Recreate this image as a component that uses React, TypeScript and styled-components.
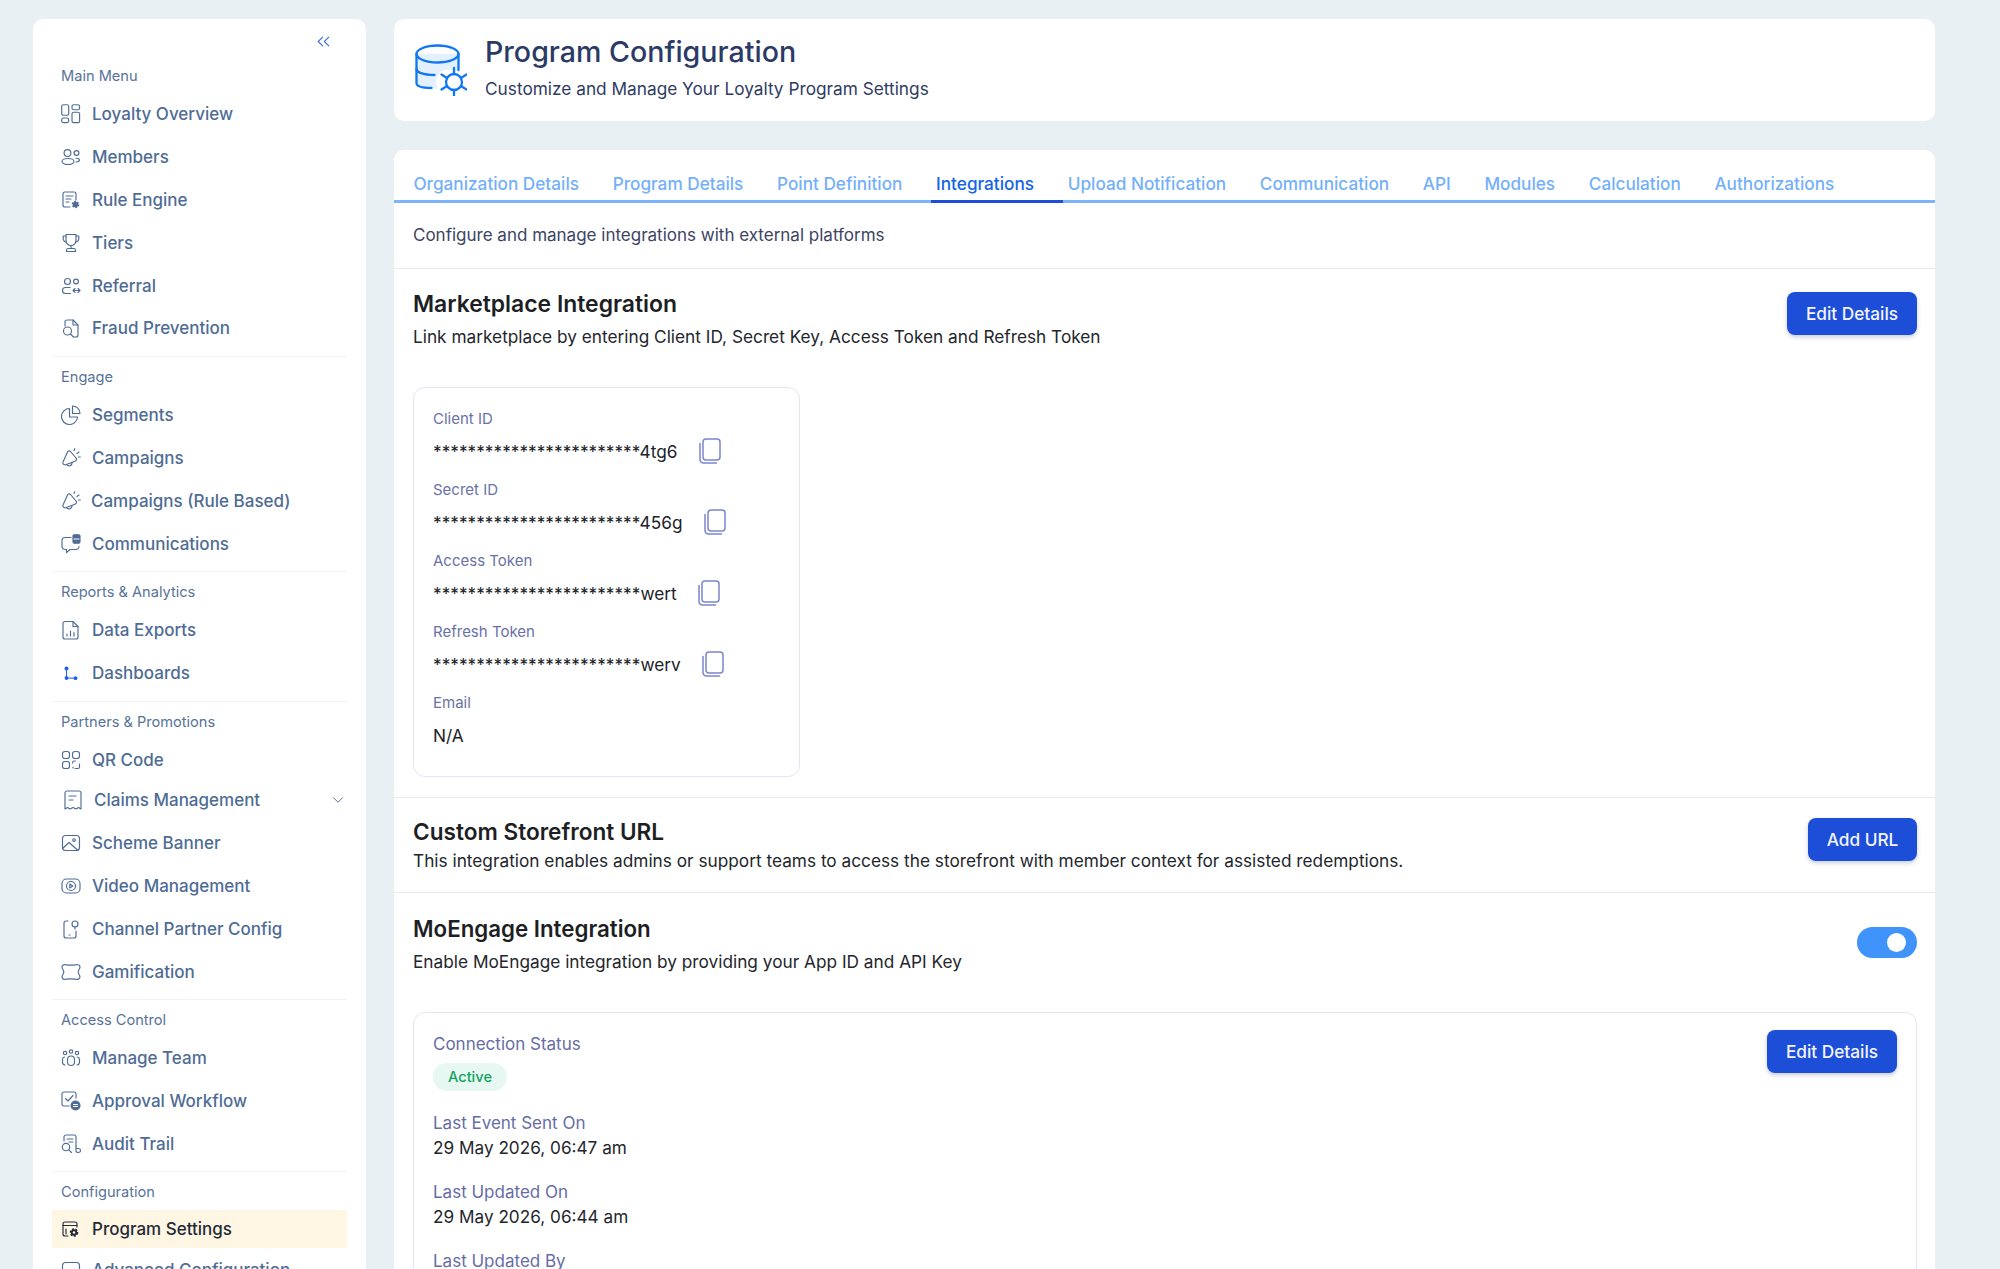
import React from "react";
import styled, { createGlobalStyle } from "styled-components";
import { ChevronDown, ChevronsLeft } from "lucide-react";

const GlobalStyle = createGlobalStyle`
  html, body {
    margin: 0;
    height: 1269px;
    overflow: hidden;
    background: #e9f0f4;
    font-family: Inter, "Noto Sans", sans-serif;
  }
  * { box-sizing: border-box; }
`;

const Page = styled.div`
  display: flex;
  align-items: flex-start;
  gap: 28px;
  height: 1269px;
  padding: 19px 65px 0 33px;
  overflow: hidden;
`;

const Sidebar = styled.aside`
  flex: 0 0 333px;
  background: #fff;
  border-radius: 10px;
  padding: 0 19px 40px;
`;

const CollapseRow = styled.div`
  display: flex;
  align-items: center;
  justify-content: flex-end;
  height: 44px;
  padding-right: 13px;
  color: #3b74d8;
`;

const Group = styled.div<{ $first?: boolean }>`
  padding: ${(p) => (p.$first ? "0" : "7px")} 0 6px;
  border-bottom: 1.5px solid #f1f2f4;
  &:last-child { border-bottom: 0; }
`;

const GroupLabel = styled.div`
  height: 26px;
  margin-bottom: 4px;
  padding-left: 9px;
  display: flex;
  align-items: center;
  font-size: 14.6px;
  color: #587399;
`;

const Item = styled.div<{ $active?: boolean; $short?: boolean; $shift?: number }>`
  display: flex;
  align-items: center;
  gap: 11px;
  height: ${(p) => (p.$active ? "38px" : p.$short ? "40.5px" : "42.8px")};
  margin: ${(p) => (p.$active ? "4.5px 0 1px" : "0")};
  padding-left: ${(p) => 9 + (p.$shift ?? 0)}px;
  padding-bottom: ${(p) => (p.$short ? "4px" : "0")};
  font-size: 17px;
  font-weight: 500;
  color: ${(p) => (p.$active ? "#232b38" : "#4f6c95")};
  background: ${(p) => (p.$active ? "#fff6e3" : "transparent")};
  svg { flex: none; }
`;

const ItemText = styled.span<{ $pull?: boolean }>`
  flex: 1;
  white-space: nowrap;
  margin-left: ${(p) => (p.$pull ? "-1px" : "0")};
`;

const Main = styled.main`
  flex: 0 0 1541px;
  display: flex;
  flex-direction: column;
  gap: 29px;
`;

const HeaderCard = styled.header`
  display: flex;
  align-items: center;
  gap: 18px;
  height: 102px;
  padding: 0 21px;
  background: #fff;
  border-radius: 10px;
`;

const HeaderText = styled.div`
  align-self: flex-start;
  display: flex;
  flex-direction: column;
  gap: 8px;
  margin-top: 14.5px;
`;

const PageTitle = styled.h1`
  margin: 0;
  font-size: 28.6px;
  line-height: 36px;
  font-weight: 500;
  color: #2b3a67;
`;

const PageSubtitle = styled.p`
  margin: 0;
  font-size: 17.25px;
  line-height: 22px;
  color: #2f3b63;
`;

const ContentCard = styled.section`
  background: #fff;
  border-radius: 10px 10px 0 0;
`;

const TabBar = styled.nav`
  display: flex;
  height: 53px;
  padding: 0 0 0 2.6px;
  border-bottom: 3px solid #7db5fb;
`;

const Tab = styled.div<{ $active?: boolean }>`
  position: relative;
  display: flex;
  align-items: center;
  padding: 17px 16.85px 0;
  font-size: 17.2px;
  font-weight: 500;
  white-space: nowrap;
  color: ${(p) => (p.$active ? "#1464e6" : "#74b0fa")};
  ${(p) =>
    p.$active &&
    `&::after {
      content: "";
      position: absolute;
      left: 12px;
      right: -12px;
      bottom: -3px;
      height: 3px;
      background: #1d4ed8;
    }`}
`;

const Intro = styled.p`
  margin: 0;
  height: 65px;
  padding: 20px 19px 0;
  font-size: 17px;
  line-height: 24px;
  color: #3d4463;
`;

const Section = styled.div<{ $pad: string }>`
  padding: ${(p) => p.$pad};
  border-top: 1.5px solid #e9e9ee;
`;

const SectionHead = styled.div`
  display: flex;
  align-items: flex-start;
  justify-content: space-between;
`;

const SectionTitle = styled.h2<{ $size: number }>`
  margin: 0;
  font-size: ${(p) => p.$size}px;
  line-height: 28px;
  font-weight: 600;
  color: #1d1f24;
`;

const SectionText = styled.p<{ $gap: number }>`
  margin: ${(p) => p.$gap}px 0 0;
  font-size: 17.25px;
  line-height: 24px;
  color: #23262c;
`;

const Button = styled.button<{ $width: number; $drop?: number }>`
  flex: none;
  width: ${(p) => p.$width}px;
  height: 42.5px;
  margin-top: ${(p) => p.$drop ?? 0}px;
  border: 0;
  border-radius: 8px;
  background: #1d4ed8;
  box-shadow: 0 2px 4px rgba(30, 50, 120, 0.25);
  color: #f2f5ff;
  font-family: inherit;
  font-size: 17.25px;
  font-weight: 500;
`;

const Box = styled.div<{ $width?: string; $pad: string }>`
  display: flex;
  justify-content: space-between;
  align-items: flex-start;
  width: ${(p) => p.$width ?? "100%"};
  margin-top: 38px;
  padding: ${(p) => p.$pad};
  border: 1.5px solid #e4e4f5;
  border-radius: 12px;
`;

const CredentialList = styled.div`
  display: flex;
  flex-direction: column;
`;

const Credential = styled.div`
  height: 71px;
`;

const CredentialLabel = styled.div`
  height: 22px;
  line-height: 22px;
  font-size: 15px;
  color: #6a71a8;
`;

const CredentialValue = styled.div`
  display: flex;
  align-items: center;
  gap: 20px;
  height: 34px;
  margin-top: 4px;
  font-size: 17.25px;
  color: #202228;
  white-space: nowrap;
`;

const Toggle = styled.div`
  position: relative;
  flex: none;
  width: 60px;
  height: 31px;
  margin-top: 12px;
  border-radius: 16px;
  background: #4093fb;
  &::after {
    content: "";
    position: absolute;
    top: 6px;
    right: 11px;
    width: 19px;
    height: 19px;
    border-radius: 50%;
    background: #fff;
  }
`;

const Status = styled.div`
  display: flex;
  flex-direction: column;
`;

const StatusLabel = styled.div<{ $gap?: number }>`
  height: 22px;
  line-height: 22px;
  margin-top: ${(p) => p.$gap ?? 0}px;
  font-size: 17px;
  color: #666da6;
`;

const StatusValue = styled.div`
  height: 22px;
  line-height: 22px;
  margin-top: 3px;
  font-size: 17.2px;
  color: #23262c;
`;

const Pill = styled.span`
  align-self: flex-start;
  display: flex;
  align-items: center;
  height: 28px;
  margin-top: 8px;
  padding: 0 15px;
  border-radius: 14px;
  background: #e6f8f1;
  color: #12a45f;
  font-size: 14.6px;
  font-weight: 500;
`;

type IconName =
  | "overview" | "members" | "rule" | "tiers" | "referral" | "fraud" | "segments" | "campaigns"
  | "comms" | "exports" | "dashboards" | "qr" | "claims" | "banner" | "video" | "channel"
  | "game" | "team" | "approval" | "audit" | "settings" | "advanced";

const iconParts: Record<IconName, React.ReactNode> = {
  overview: (
    <>
      <rect x="0.7" y="0.7" width="7" height="10.5" rx="1.6" />
      <rect x="11" y="0.7" width="7.6" height="5" rx="1.8" />
      <rect x="0.7" y="14" width="7" height="4.6" rx="1.8" />
      <rect x="11" y="8.2" width="7.6" height="10.4" rx="1.6" />
    </>
  ),
  members: (
    <>
      <circle cx="6.5" cy="6" r="3.4" />
      <ellipse cx="7" cy="14.5" rx="6" ry="3" />
      <circle cx="15.5" cy="6" r="2.4" />
      <path d="M15 11.2c2 0 3.5.8 3.5 1.9s-1.4 1.8-3.3 1.9" />
    </>
  ),
  rule: (
    <>
      <path d="M9 17H4a2 2 0 0 1-2-2V4a2 2 0 0 1 2-2h9a2 2 0 0 1 2 2v6" />
      <path d="M5 6h7M5 9h5M5 12h3" />
      <circle cx="14.5" cy="14.5" r="2.6" fill="currentColor" strokeWidth="2.4" strokeDasharray="1.6 1.1" strokeLinecap="butt" />
      <circle cx="14.5" cy="14.5" r="2.4" fill="currentColor" stroke="none" />
    </>
  ),
  tiers: (
    <>
      <path d="M5 1.5h10v6a5 5 0 0 1-10 0z" />
      <path d="M5 3H2.2v2.2A3.4 3.4 0 0 0 5.4 9M15 3h2.8v2.2A3.4 3.4 0 0 1 14.6 9" />
      <path d="M10 12.5v3M5.5 18.5v-1.2a1.8 1.8 0 0 1 1.8-1.8h5.4a1.8 1.8 0 0 1 1.8 1.8v1.2z" />
    </>
  ),
  referral: (
    <>
      <circle cx="6.5" cy="5.5" r="3" />
      <circle cx="15" cy="5.5" r="2.4" />
      <path d="M9 11.5H4.5a3 3 0 0 0 0 6h5" />
      <path d="M12 14.5h7M14 12.5l-2 2 2 2M17 12.5l2 2-2 2" />
    </>
  ),
  fraud: (
    <>
      <path d="M4 8V4a2 2 0 0 1 2-2h6l5 5v10a2 2 0 0 1-2 2h-2" />
      <path d="M12 2v5h5" />
      <circle cx="6.5" cy="13" r="4" />
      <path d="M9.5 16l3 3" />
    </>
  ),
  segments: (
    <>
      <path d="M8.5 3.5a8 8 0 1 0 8 8.5H8.5z" />
      <path d="M11.5 1a7.5 7.5 0 0 1 7.5 7.5h-7.5z" />
    </>
  ),
  campaigns: (
    <>
      <path d="M9.5 3.500c-1-1-2.500-.5-3 .5L2 14c-.5 1 0 2 1 2.500s1.500.5 2.500 0l9-3.500c1-.5 1.500-2 .5-3z" />
      <path d="M5.500 16.500a3 3 0 0 0 5.500-2" />
      <path d="M13 2.500l.8-1.800M16 5.500l2-1.500M17.500 9h1.800" />
    </>
  ),
  comms: (
    <>
      <path d="M10 3.5H4a3 3 0 0 0-3 3v6a3 3 0 0 0 3 3h1.5v3.2L9 15.5h6a3 3 0 0 0 3-3" />
      <rect x="12" y="0.8" width="7" height="8.4" rx="1.2" fill="currentColor" />
      <path d="M13 5h5" stroke="#fff" />
    </>
  ),
  exports: (
    <>
      <path d="M4 1.5h8l5 5V17a2 2 0 0 1-2 2H4a2 2 0 0 1-2-2V3.500a2 2 0 0 1 2-2z" />
      <path d="M12 1.500v5h5" />
      <path d="M6 16v-2M9.500 16v-5M13 16v-3.500" />
    </>
  ),
  dashboards: (
    <g fill="#1d63e8" stroke="none">
      <circle cx="5.500" cy="5.500" r="2" />
      <circle cx="5.500" cy="15" r="1.900" />
      <circle cx="14.500" cy="15.200" r="1.900" />
      <rect x="5" y="6" width="1" height="9" />
      <rect x="5.500" y="14.600" width="9" height="1" />
    </g>
  ),
  qr: (
    <>
      <rect x="1.5" y="1.500" width="7" height="7" rx="2.500" />
      <rect x="11.500" y="1.500" width="7" height="7" rx="2.500" />
      <rect x="1.500" y="11.500" width="7" height="7" rx="2.500" />
      <path d="M11.500 13a2 2 0 0 1 2-2h1M18.500 14v3a1.500 1.500 0 0 1-1.500 1.500h-3M12 17v1" />
    </>
  ),
  claims: (
    <>
      <path d="M2 3a2 2 0 0 1 2-2h12a2 2 0 0 1 2 2v16l-2.500-1.500L13 19l-3-1.500L7 19l-2.500-1.500L2 19z" />
      <path d="M6 6h7M6 10h4" />
    </>
  ),
  banner: (
    <>
      <rect x="1.500" y="2.500" width="17" height="15" rx="3" />
      <circle cx="13" cy="7" r="1.300" />
      <path d="M1.500 15.500 8 9.500l9 8" />
    </>
  ),
  video: (
    <>
      <rect x="1" y="3" width="18" height="14" rx="4.500" />
      <circle cx="10" cy="10" r="4.500" />
      <path d="m8.800 8 3 2-3 2z" />
    </>
  ),
  channel: (
    <>
      <path d="M7 2H5a2 2 0 0 0-2 2v13a2 2 0 0 0 2 2h8a2 2 0 0 0 2-2v-5" />
      <circle cx="14" cy="5" r="3" />
      <path d="M14 8v2M8 16h1" />
    </>
  ),
  game: (
    <path d="M4 2.500c1 .8 11 .8 12 0 1.500 0 3 1.200 3 2.700 0 1.500-1.800 2.800-1.800 4.800s1.800 3.300 1.800 4.800c0 1.500-1.500 2.700-3 2.700-1-.8-11-.8-12 0-1.500 0-3-1.200-3-2.700 0-1.500 1.800-2.800 1.800-4.800S1 6.700 1 5.200C1 3.700 2.500 2.500 4 2.500z" />
  ),
  team: (
    <>
      <circle cx="4" cy="5" r="1.700" />
      <circle cx="10" cy="3.500" r="1.700" />
      <circle cx="16" cy="5" r="1.700" />
      <rect x="6.500" y="8" width="7" height="9.500" rx="3.500" />
      <path d="M3.500 9A2.500 2.500 0 0 0 1.500 11.500V14A3 3 0 0 0 4 17M16.500 9a2.500 2.500 0 0 1 2 2.500V14a3 3 0 0 1-2.500 3" />
    </>
  ),
  approval: (
    <>
      <path d="M8 15H3a2 2 0 0 1-2-2V3a2 2 0 0 1 2-2h10a2 2 0 0 1 2 2v4" />
      <path d="m4.500 7.500 2.500 2.500 5-5.500" />
      <circle cx="14.500" cy="14.500" r="4.500" fill="currentColor" />
      <path d="M12.500 13.500h4M12.500 15.500h4" stroke="#fff" />
    </>
  ),
  audit: (
    <>
      <path d="M3 7V3a2 2 0 0 1 2-2h8a2 2 0 0 1 2 2v9" />
      <path d="M6 5h6M8 8h4" />
      <circle cx="5" cy="13" r="3.700" />
      <path d="m7.800 15.800 2.700 2.700M15 12v5a2 2 0 0 0 2 1.500h.5a1.500 1.500 0 0 0 0-4H15" />
    </>
  ),
  settings: (
    <>
      <path d="M7 17H4a2 2 0 0 1-2-2V5a2 2 0 0 1 2-2h10a2 2 0 0 1 2 2v3" />
      <path d="M2 6.500h14M5 10v5" />
      <circle cx="13" cy="13.500" r="3" fill="currentColor" strokeWidth="2.600" strokeDasharray="1.800 1.200" strokeLinecap="butt" />
      <circle cx="13" cy="13.500" r="3" fill="currentColor" stroke="none" />
      <circle cx="13" cy="13.500" r="1.200" fill="#fff" stroke="none" />
    </>
  ),
  advanced: <rect x="1.500" y="2.500" width="17" height="15" rx="3" />,
};

const NavIcon = ({ name }: { name: IconName }) => (
  <svg width="20" height="20" viewBox="0 0 20 20" fill="none" stroke="currentColor" strokeWidth="1.15" strokeLinecap="round" strokeLinejoin="round">
    {iconParts[name]}
  </svg>
);

const CopyIcon = () => (
  <svg width="23" height="27" viewBox="0 0 23 27" fill="none" stroke="#7986cf" strokeWidth="1.500" strokeLinejoin="round" strokeLinecap="round">
    <rect x="5" y="1" width="17" height="21" rx="3" />
    <path d="M2 5.500v16a3.500 3.500 0 0 0 3.500 3.500h13" />
  </svg>
);

const DatabaseIcon = () => (
  <svg width="52" height="52" viewBox="0 0 52 52" fill="none" stroke="#0f78f2" strokeWidth="2.300" strokeLinecap="round" strokeLinejoin="round">
    <path d="M1.500 10v30c0 3 5 4.500 12 4.500h9c-2-4-2-10 1-14 3-5 11-7 21-2V10z" fill="#e4f0fd" stroke="none" />
    <ellipse cx="22.500" cy="10" rx="21" ry="8.500" />
    <path d="M1.500 10v29c0 3 5 5 15 5" />
    <path d="M1.500 25c0 3 6 6 18 6" />
    <path d="M43.500 10v16" />
    <circle cx="39" cy="38" r="8" fill="#fff" />
    <path d="M39 24v6M39 46v6M26.500 30.500l5.500 3.500M46 42l5.500 3.500M26.500 45.500l5.500-3.500M46 34l5.500-3.500" />
  </svg>
);

type NavEntry = { label: string; icon: IconName; shift?: number; pull?: boolean; short?: boolean; caret?: boolean; active?: boolean };

const nav: { title: string; items: NavEntry[] }[] = [
  {
    title: "Main Menu",
    items: [
      { label: "Loyalty Overview", icon: "overview" },
      { label: "Members", icon: "members" },
      { label: "Rule Engine", icon: "rule" },
      { label: "Tiers", icon: "tiers" },
      { label: "Referral", icon: "referral" },
      { label: "Fraud Prevention", icon: "fraud" },
    ],
  },
  {
    title: "Engage",
    items: [
      { label: "Segments", icon: "segments" },
      { label: "Campaigns", icon: "campaigns" },
      { label: "Campaigns (Rule Based)", icon: "campaigns", pull: true },
      { label: "Communications", icon: "comms" },
    ],
  },
  {
    title: "Reports & Analytics",
    items: [
      { label: "Data Exports", icon: "exports" },
      { label: "Dashboards", icon: "dashboards" },
    ],
  },
  {
    title: "Partners & Promotions",
    items: [
      { label: "QR Code", icon: "qr" },
      { label: "Claims Management", icon: "claims", shift: 2, short: true, caret: true },
      { label: "Scheme Banner", icon: "banner" },
      { label: "Video Management", icon: "video" },
      { label: "Channel Partner Config", icon: "channel" },
      { label: "Gamification", icon: "game" },
    ],
  },
  {
    title: "Access Control",
    items: [
      { label: "Manage Team", icon: "team" },
      { label: "Approval Workflow", icon: "approval" },
      { label: "Audit Trail", icon: "audit" },
    ],
  },
  {
    title: "Configuration",
    items: [
      { label: "Program Settings", icon: "settings", active: true },
      { label: "Advanced Configuration", icon: "advanced" },
    ],
  },
];

const tabs = [
  "Organization Details",
  "Program Details",
  "Point Definition",
  "Integrations",
  "Upload Notification",
  "Communication",
  "API",
  "Modules",
  "Calculation",
  "Authorizations",
];

const stars = "*".repeat(24);

const credentials = [
  { label: "Client ID", value: stars + "4tg6" },
  { label: "Secret ID", value: stars + "456g" },
  { label: "Access Token", value: stars + "wert" },
  { label: "Refresh Token", value: stars + "werv" },
];

const App = () => (
  <>
    <GlobalStyle />
    <Page>
      <Sidebar>
        <CollapseRow>
          <ChevronsLeft size={21} strokeWidth={1.300} />
        </CollapseRow>
        {nav.map((group, i) => (
          <Group key={group.title} $first={i === 0}>
            <GroupLabel>{group.title}</GroupLabel>
            {group.items.map((item) => (
              <Item key={item.label} $active={item.active} $short={item.short} $shift={item.shift}>
                <NavIcon name={item.icon} />
                <ItemText $pull={item.pull}>{item.label}</ItemText>
                {item.caret && <ChevronDown size={18} strokeWidth={1.300} />}
              </Item>
            ))}
          </Group>
        ))}
      </Sidebar>
      <Main>
        <HeaderCard>
          <DatabaseIcon />
          <HeaderText>
            <PageTitle>Program Configuration</PageTitle>
            <PageSubtitle>Customize and Manage Your Loyalty Program Settings</PageSubtitle>
          </HeaderText>
        </HeaderCard>
        <ContentCard>
          <TabBar>
            {tabs.map((tab) => (
              <Tab key={tab} $active={tab === "Integrations"}>
                {tab}
              </Tab>
            ))}
          </TabBar>
          <Intro>Configure and manage integrations with external platforms</Intro>
          <Section $pad="21px 18px 20px 19px">
            <SectionHead>
              <div>
                <SectionTitle $size={22.9}>Marketplace Integration</SectionTitle>
                <SectionText $gap={7}>Link marketplace by entering Client ID, Secret Key, Access Token and Refresh Token</SectionText>
              </div>
              <Button $width={130} $drop={2}>Edit Details</Button>
            </SectionHead>
            <Box $width="387px" $pad="20px 19px 13px">
              <CredentialList>
                {credentials.map((c) => (
                  <Credential key={c.label}>
                    <CredentialLabel>{c.label}</CredentialLabel>
                    <CredentialValue>
                      {c.value}
                      <CopyIcon />
                    </CredentialValue>
                  </Credential>
                ))}
                <Credential>
                  <CredentialLabel>Email</CredentialLabel>
                  <CredentialValue>N/A</CredentialValue>
                </Credential>
              </CredentialList>
            </Box>
          </Section>
          <Section $pad="20px 18px 19px 19px">
            <SectionHead>
              <div>
                <SectionTitle $size={22.6}>Custom Storefront URL</SectionTitle>
                <SectionText $gap={3}>This integration enables admins or support teams to access the storefront with member context for assisted redemptions.</SectionText>
              </div>
              <Button $width={109}>Add URL</Button>
            </SectionHead>
          </Section>
          <Section $pad="22px 18px 0 19px">
            <SectionHead>
              <div>
                <SectionTitle $size={22.3}>MoEngage Integration</SectionTitle>
                <SectionText $gap={7}>Enable MoEngage integration by providing your App ID and API Key</SectionText>
              </div>
              <Toggle />
            </SectionHead>
            <Box $pad="20px 19px 40px">
              <Status>
                <StatusLabel>Connection Status</StatusLabel>
                <Pill>Active</Pill>
                <StatusLabel $gap={20.500}>Last Event Sent On</StatusLabel>
                <StatusValue>29 May 2026, 06:47 am</StatusValue>
                <StatusLabel $gap={22.500}>Last Updated On</StatusLabel>
                <StatusValue>29 May 2026, 06:44 am</StatusValue>
                <StatusLabel $gap={22}>Last Updated By</StatusLabel>
              </Status>
              <Button $width={130} $drop={-3}>Edit Details</Button>
            </Box>
          </Section>
        </ContentCard>
      </Main>
    </Page>
  </>
);

export default App;
